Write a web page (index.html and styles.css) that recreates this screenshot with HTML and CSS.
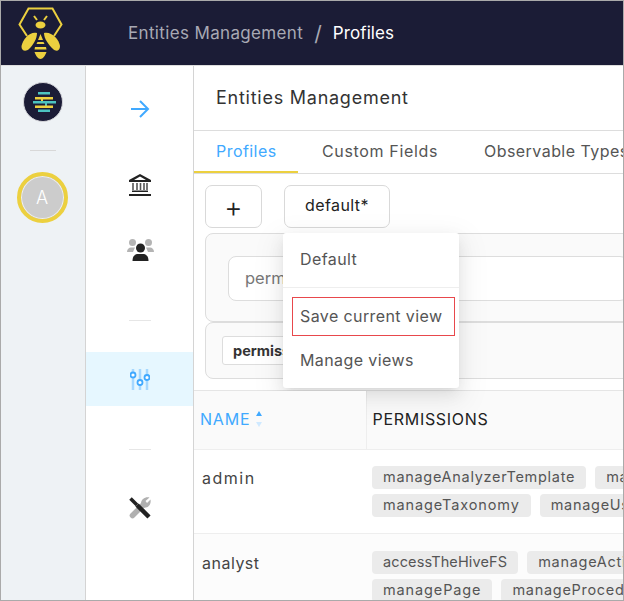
FILE: index.html
```html
<!DOCTYPE html>
<html lang="en">

<head>
    <meta charset="UTF-8">
    <meta name="viewport" content="width=device-width, initial-scale=1.0">
    <title>Entities Management</title>
    <link rel="stylesheet" href="styles.css">
</head>

<body>
    <div class="app">
        <header class="topbar">
            <svg class="logo" width="64" height="64" viewBox="0 0 64 64">
                <path d="M27 35 L19.500 23.500 L28.500 7.500 H52.500 L61.500 23.500 L54 35" fill="none" stroke="#ecd03f" stroke-width="2"/>
                <path d="M34 15 L37 19 M47 15 L44 19" stroke="#ecd03f" stroke-width="2"/>
                <ellipse cx="40.500" cy="24" rx="5" ry="3.500" fill="#ecd03f"/>
                <path d="M37 32 C30 30 23 38 21.500 45 C21 50 26 51 29 48 C33 44 37 38 37 32 Z" fill="#ecd03f"/>
                <path d="M44 32 C51 30 59 38 60 45 C60 50 56 51 53 48 C49 44 44 38 44 32 Z" fill="#ecd03f"/>
                <path d="M40.500 33 L38 39 H43 Z M37.500 41 H43.500 L44.500 43 H36.500 Z M35 46 H46 L46.500 48.500 H34.500 Z M34.500 51 H46.500 C45 55 43 58 40.500 58 C38 58 36 55 34.500 51 Z" fill="#ecd03f"/>
            </svg>
            <nav class="crumbs">
                <span class="crumb">Entities Management</span>
                <span class="crumb-sep">/</span>
                <span class="crumb-current">Profiles</span>
            </nav>
        </header>

        <div class="body">
            <aside class="rail">
                <div class="org">
                    <svg width="40" height="40" viewBox="0 0 40 40">
                        <circle cx="20" cy="20" r="19.500" fill="#1b1c36" stroke="#d5d6da" stroke-width="1"/>
                        <rect x="15" y="10" width="12" height="2.500" fill="#4cc3c0"/>
                        <rect x="12" y="15" width="18" height="2.500" fill="#ecd03f"/>
                        <rect x="18" y="17" width="2" height="3" fill="#ecd03f"/>
                        <rect x="10" y="19" width="23" height="2.500" fill="#4cc3c0"/>
                        <rect x="22" y="21" width="2" height="3" fill="#4cc3c0"/>
                        <rect x="12" y="23.500" width="18" height="2.500" fill="#ecd03f"/>
                        <rect x="15" y="27.500" width="12" height="2.500" fill="#4cc3c0"/>
                    </svg>
                </div>
                <hr class="rail-line">
                <div class="avatar"><span>A</span></div>
            </aside>

            <aside class="side">
                <div class="side-item arrow">
                    <svg width="20" height="18" viewBox="0 0 20 18">
                        <path d="M1 9 H18 M10 1 L18 9 L10 17" fill="none" stroke="#40a9ff" stroke-width="2"/>
                    </svg>
                </div>
                <div class="side-item bank">
                    <svg width="22" height="22" viewBox="0 0 22 22">
                        <path d="M11 0 L22 6 V8 H0 V6 Z M11 2.500 L5 6 H17 Z" fill-rule="evenodd" fill="#222"/>
                        <path d="M4 9 V16 M8 9 V16 M11.500 9 V16 M15 9 V16 M18 9 V16" stroke="#555" stroke-width="1.600"/>
                        <rect x="3" y="16.500" width="16" height="1.500" fill="#222"/>
                        <rect x="0" y="20" width="22" height="2" fill="#222"/>
                    </svg>
                </div>
                <div class="side-item users">
                    <svg width="28" height="22" viewBox="0 0 28 22">
                        <circle cx="5.500" cy="3.500" r="3.500" fill="#b4b4b4"/>
                        <circle cx="21.500" cy="3.500" r="3.500" fill="#b4b4b4"/>
                        <path d="M0 13 C0 10 2 8.500 4 8.500 H8 L6 13 Z M27 13 C27 10 25 8.500 23 8.500 H19 L21 13 Z" fill="#b4b4b4"/>
                        <circle cx="13.500" cy="9" r="4.500" fill="#222"/>
                        <path d="M5.500 22 C5.500 17 8 15 11 15 H16 C19 15 21.500 17 21.500 22 Z" fill="#222"/>
                    </svg>
                </div>
                <hr class="side-line line-one">
                <div class="side-item active">
                    <svg width="20" height="21" viewBox="0 0 20 21">
                        <path d="M3 0 V21 M10 0 V21 M17 0 V21" stroke="#a6d8ff" stroke-width="2.500"/>
                        <circle cx="3" cy="6" r="2.500" fill="#fff" stroke="#40a9ff" stroke-width="1.800"/>
                        <circle cx="10" cy="13.500" r="2.500" fill="#fff" stroke="#40a9ff" stroke-width="1.800"/>
                        <circle cx="17" cy="8.500" r="2.500" fill="#fff" stroke="#40a9ff" stroke-width="1.800"/>
                    </svg>
                </div>
                <hr class="side-line line-two">
                <div class="side-item tools">
                    <svg width="22" height="22" viewBox="0 0 22 22">
                        <path d="M3.500 18.500 L14 8" stroke="#b0b0b0" stroke-width="5.500" stroke-linecap="round"/>
                        <path d="M12 6.500 C12 2 16.500 -0.500 20.500 0.500 L16.500 4 L18 6 L21.500 2.500 C22.500 7.500 19 11.500 14 10.500 Z" fill="#b0b0b0"/>
                        <path d="M1.500 1.500 L8 8" stroke="#222" stroke-width="3.500"/>
                        <path d="M8 8 L20 20" stroke="#222" stroke-width="4.500"/>
                    </svg>
                </div>
            </aside>

            <main class="main">
                <div class="title-row">Entities Management</div>
                <div class="tabs">
                    <span class="tab current">Profiles</span>
                    <span class="tab custom">Custom Fields</span>
                    <span class="tab observable">Observable Types</span>
                </div>

                <div class="toolbar">
                    <button class="btn add">+</button>
                    <button class="btn view">default*</button>
                </div>

                <div class="filter-card">
                    <div class="filter-input">permissions</div>
                </div>
                <div class="chips-card">
                    <span class="filter-tag">permissions</span>
                </div>

                <div class="menu">
                    <div class="menu-item first">Default</div>
                    <div class="menu-divider"></div>
                    <div class="menu-item selected">Save current view</div>
                    <div class="menu-item manage">Manage views</div>
                </div>

                <table class="profiles">
                    <thead>
                        <tr>
                            <th class="col-name">
                                NAME
                                <span class="sorter"><i class="up"></i><i class="down"></i></span>
                            </th>
                            <th>PERMISSIONS</th>
                        </tr>
                    </thead>
                    <tbody>
                        <tr class="row-admin">
                            <td class="col-name">admin</td>
                            <td>
                                <div class="perm-line">
                                    <span class="perm">manageAnalyzerTemplate</span>
                                    <span class="perm">manageAction</span>
                                </div>
                                <div class="perm-line">
                                    <span class="perm wide">manageTaxonomy</span>
                                    <span class="perm">manageUser</span>
                                </div>
                            </td>
                        </tr>
                        <tr class="row-analyst">
                            <td class="col-name">analyst</td>
                            <td>
                                <div class="perm-line">
                                    <span class="perm narrow">accessTheHiveFS</span>
                                    <span class="perm">manageAction</span>
                                </div>
                                <div class="perm-line">
                                    <span class="perm wide">managePage</span>
                                    <span class="perm">manageProcedure</span>
                                </div>
                            </td>
                        </tr>
                    </tbody>
                </table>
            </main>
        </div>
    </div>
</body>

</html>
```

FILE: styles.css
```css
* {
    box-sizing: border-box;
}

html, body {
    margin: 0;
    padding: 0;
}

body {
    font-family: "Inter", "DejaVu Sans", sans-serif;
    color: #333;
}

.app {
    width: 624px;
    height: 601px;
    border: 1px solid #aaa;
    overflow: hidden;
    display: flex;
    flex-direction: column;
}

.topbar {
    height: 64px;
    flex: none;
    background-color: #1b1c36;
    display: flex;
    align-items: center;
}

.logo {
    flex: none;
    margin-top: -1px;
    margin-left: -1px;
}

.crumbs {
    margin-left: 64px;
    display: flex;
    align-items: center;
    font-size: 17px;
    white-space: nowrap;
}

.crumb {
    color: #a8a9b4;
    letter-spacing: 0.35px;
}

.crumb-sep {
    color: #a8a9b4;
    font-size: 21px;
    margin: 0 11px;
}

.crumb-current {
    color: #fff;
    letter-spacing: 0.1px;
}

.body {
    flex: 1;
    display: flex;
    min-height: 0;
    border-top: 1px solid #ddd;
}

.rail {
    width: 85px;
    flex: none;
    background-color: #eef2f5;
    border-right: 1px solid #d4d4d4;
    display: flex;
    flex-direction: column;
    align-items: center;
    padding-top: 16px;
}

.org {
    height: 40px;
}

.rail-line {
    width: 26px;
    height: 1px;
    margin: 28px 0 21px;
    border: none;
    background-color: #d8d8d8;
}

.avatar {
    width: 51px;
    height: 51px;
    margin-right: 2px;
    border-radius: 50%;
    border: 4px solid #ecd03f;
    background-color: #ccc;
    box-shadow: inset 0 0 0 1px #eee;
    color: #fff;
    font-size: 18px;
    font-weight: 300;
    display: flex;
    align-items: center;
    justify-content: center;
}

.side {
    width: 108px;
    flex: none;
    border-right: 1px solid #d4d4d4;
    display: flex;
    flex-direction: column;
}

.side-item {
    height: 54px;
    flex: none;
    display: flex;
    align-items: center;
    justify-content: center;
}

.arrow {
    margin-top: 16px;
}

.bank {
    margin-top: 22px;
}

.users {
    margin-top: 11px;
    padding-left: 3px;
}

.side-line {
    width: 22px;
    height: 1px;
    flex: none;
    border: none;
    background-color: #e6e6e6;
}

.line-one {
    margin: 43px auto 31px;
}

.line-two {
    margin: 43px auto 31px;
}

.active {
    background-color: #e6f7ff;
}

.main {
    flex: 1;
    min-width: 0;
    position: relative;
    overflow: hidden;
}

.title-row {
    height: 65px;
    padding: 21px 0 0 22px;
    font-size: 18px;
    letter-spacing: 0.75px;
    color: #333;
    border-bottom: 1px solid #ddd;
}

.tabs {
    height: 43px;
    display: flex;
    border-bottom: 1px solid #ddd;
    white-space: nowrap;
    font-size: 16px;
    color: #555;
}

.tab {
    flex: none;
    padding-top: 10px;
    letter-spacing: 0.45px;
}

.current {
    width: 104px;
    padding-left: 22px;
    color: #40a9ff;
    border-bottom: 2px solid #ecd03f;
}

.custom {
    margin-left: 24px;
    letter-spacing: 0.65px;
}

.observable {
    margin-left: 46px;
}

.toolbar {
    display: flex;
    padding: 11px 0 0 11px;
    height: 59px;
}

.btn {
    height: 43px;
    border: 1px solid #d9d9d9;
    border-radius: 7px;
    background-color: #fff;
    font-family: inherit;
    color: #222;
    padding: 0;
}

.add {
    width: 57px;
    font-size: 28px;
    font-weight: 300;
    line-height: 1;
}

.view {
    width: 106px;
    margin-left: 22px;
    font-size: 16px;
    letter-spacing: 0.4px;
    padding-bottom: 4px;
}

.filter-card {
    width: 520px;
    height: 89px;
    margin-left: 11px;
    padding: 22px 0 0 22px;
    background-color: #fafafa;
    border: 1px solid #ddd;
    border-radius: 8px 0 0 8px;
}

.filter-input {
    width: 400px;
    height: 45px;
    padding: 11px 0 0 16px;
    background-color: #fff;
    border: 1px solid #ddd;
    border-radius: 8px;
    font-size: 16.500px;
    color: #777;
}

.chips-card {
    width: 520px;
    height: 57px;
    margin-left: 11px;
    padding: 13px 0 0 16px;
    background-color: #fafafa;
    border: 1px solid #ddd;
    border-radius: 8px 0 0 8px;
}

.filter-tag {
    display: inline-block;
    height: 29px;
    padding: 5px 10px;
    background-color: #fff;
    border: 1px solid #ddd;
    border-radius: 3px;
    font-size: 14.500px;
    font-weight: 700;
    color: #333;
}

.menu {
    position: absolute;
    left: 89px;
    top: 167px;
    width: 176px;
    height: 155px;
    background-color: #fff;
    border-radius: 3px;
    box-shadow: 0 3px 6px -4px rgba(0, 0, 0, 0.12), 0 6px 16px rgba(0, 0, 0, 0.08), 0 9px 28px 8px rgba(0, 0, 0, 0.05);
    font-size: 16px;
    color: #555;
    white-space: nowrap;
}

.menu-item {
    letter-spacing: 0.4px;
}

.first {
    height: 54px;
    padding: 16px 0 0 17px;
}

.menu-divider {
    height: 1px;
    margin-bottom: 9px;
    background-color: #eee;
}

.selected {
    width: 163px;
    height: 39px;
    margin-left: 9px;
    padding: 8px 0 0 7px;
    border: 1px solid #e8484c;
}

.manage {
    margin-top: 4px;
    height: 40px;
    padding: 10px 0 0 17px;
}

.profiles {
    width: 520px;
    margin-top: 11px;
    border-collapse: collapse;
    table-layout: fixed;
    font-size: 16px;
}

.profiles th {
    height: 59px;
    padding: 0 0 2px 6px;
    text-align: left;
    font-weight: 400;
    letter-spacing: 0.7px;
    color: #222;
    background-color: #fafafa;
    border-top: 1px solid #e5e5e5;
    border-bottom: 1px solid #eee;
}

.profiles th + th {
    border-left: 1px solid #eee;
}

.profiles th.col-name {
    width: 172px;
    color: #40a9ff;
    position: relative;
    letter-spacing: 0.8px;
}

.sorter {
    position: absolute;
    left: 62px;
    top: 20px;
}

.sorter i {
    display: block;
    width: 0;
    height: 0;
    border-left: 3.500px solid transparent;
    border-right: 3.500px solid transparent;
}

.up {
    border-bottom: 5px solid #40a9ff;
    margin-bottom: 6px;
}

.down {
    border-top: 5px solid #cfe9ff;
}

.profiles td {
    vertical-align: top;
    padding: 0 0 0 6px;
    border-bottom: 1px solid #eee;
}

.row-admin td {
    height: 84px;
    padding-top: 16px;
}

.row-analyst td {
    height: 84px;
    padding-top: 17px;
    background-color: #fcfcfc;
}

.profiles td.col-name {
    padding-left: 8px;
    padding-top: 18px;
    font-size: 16px;
    letter-spacing: 0.5px;
    color: #444;
}

.profiles .row-analyst td.col-name {
    padding-top: 19px;
}

.profiles .row-admin td.col-name {
    letter-spacing: 1.5px;
}

.perm-line {
    display: flex;
    gap: 9px;
    margin-bottom: 5px;
    white-space: nowrap;
}

.perm {
    flex: none;
    height: 23px;
    padding: 2px 11px 0;
    background-color: #ebebeb;
    border-radius: 4px;
    font-size: 14.500px;
    letter-spacing: 0.7px;
    color: #555;
}

.narrow {
    letter-spacing: 0.13px;
}

.wide {
    letter-spacing: 0.88px;
}
```
